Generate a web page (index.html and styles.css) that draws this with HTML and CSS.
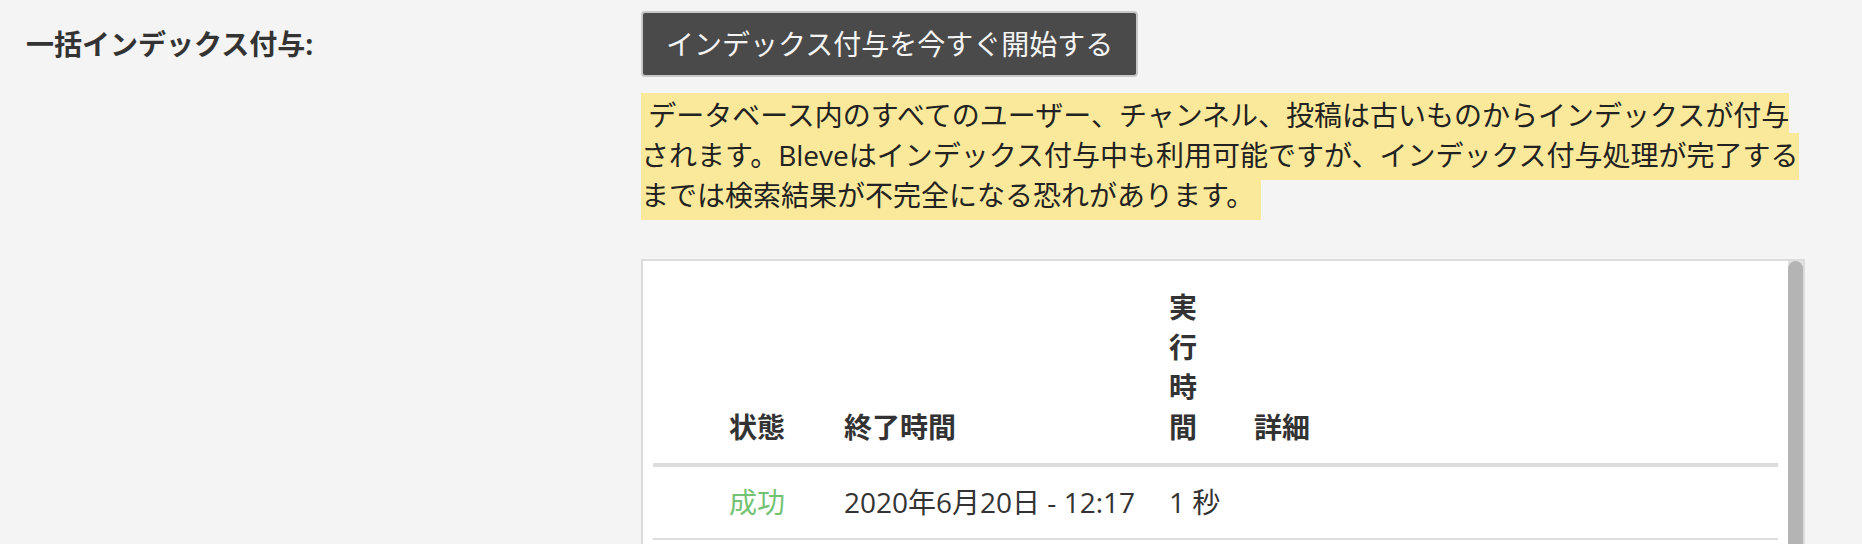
FILE: index.html
```html
<!DOCTYPE html>
<html lang="ja">
<head>
<meta charset="utf-8">
<title>一括インデックス付与</title>
<link rel="stylesheet" href="styles.css">
</head>
<body>
<div class="setting">
  <div class="setting-label">一括インデックス付与:</div>
  <div class="setting-body">
    <button class="btn" type="button">インデックス付与を今すぐ開始する</button>
    <p class="help"><span class="mark">&nbsp;データベース内のすべてのユーザー、チャンネル、投稿は古いものからインデックスが付与されます。Bleveはインデックス付与中も利用可能ですが、インデックス付与処理が完了するまでは検索結果が不完全になる恐れがあります。&nbsp;</span></p>
    <div class="jobs">
      <div class="jobs-scroll">
        <div class="jobs-table">
          <div class="jobs-head">
            <div class="cell"></div>
            <div class="cell">状態</div>
            <div class="cell">終了時間</div>
            <div class="cell"><span class="narrow">実行時間</span></div>
            <div class="cell">詳細</div>
          </div>
          <div class="jobs-row">
            <div class="cell"></div>
            <div class="cell status-success">成功</div>
            <div class="cell">2020年6月20日 - 12:17</div>
            <div class="cell">1 秒</div>
            <div class="cell"></div>
          </div>
        </div>
      </div>
      <div class="scrollbar"><div class="thumb"></div></div>
    </div>
  </div>
</div>
</body>
</html>
```

FILE: styles.css
```css
html, body {
  margin: 0;
  padding: 0;
  overflow: hidden;
  height: 544px;
}

body {
  background: #f4f4f4;
  font-family: "Open Sans", "Noto Sans CJK JP", sans-serif;
  font-size: 28px;
  color: #333;
}

.setting {
  display: flex;
  padding: 11px 0 0 26px;
}

.setting-label {
  width: 615px;
  flex: none;
  font-weight: 700;
  line-height: 66px;
  color: #333;
}

.setting-body {
  width: 1164px;
  flex: none;
}

.btn {
  display: block;
  height: 66px;
  padding: 0 23px;
  border: 2px solid #c8c8c8;
  border-radius: 4px;
  background: #4a4a4a;
  color: #f4f4f4;
  font-family: "Open Sans", "Noto Sans CJK JP", sans-serif;
  font-size: 28px;
  line-height: 62px;
}

.help {
  margin: 18px 0 0;
  width: 1170px;
  line-height: 40px;
  color: #222;
}

.mark {
  background: #fbe99b;
  padding: 3px 0 6px;
  line-height: 40px;
}

.jobs {
  margin-top: 44px;
  height: 420px;
  display: flex;
  border: 2px solid #dcdcdc;
  background: #fff;
}

.jobs-scroll {
  flex: 1;
  padding: 0 10px;
}

.jobs-head,
.jobs-row {
  display: grid;
  grid-template-columns: 76px 115px 325px 85px 1fr;
  line-height: 40px;
}

.jobs-head {
  align-items: end;
  padding: 26px 0 16px;
  border-bottom: 4px solid #dddddd;
  font-weight: 700;
  color: #333;
}

.narrow {
  display: block;
  width: 36px;
}

.jobs-row {
  padding: 15px 0 16px;
  border-bottom: 2px solid #dddddd;
  color: #333;
}

.status-success {
  color: #74c374;
}

.scrollbar {
  width: 15px;
  flex: none;
  background: #e4e4e4;
}

.thumb {
  height: 380px;
  background: #b4b4b4;
  border-radius: 8px 8px 0 0;
}
```
